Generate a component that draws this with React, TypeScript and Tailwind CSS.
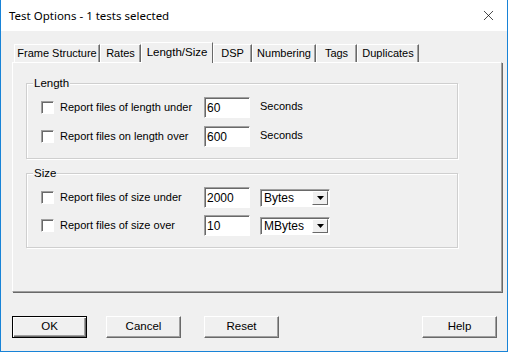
import { X } from 'lucide-react'

const font = { fontFamily: '"Liberation Sans", Arial, sans-serif' }

const tabs = [
  { label: 'Frame Structure', w: 'w-[86px]' },
  { label: 'Rates', w: 'w-[41px]' },
  { label: 'Length/Size', w: 'w-[72px]', active: true },
  { label: 'DSP', w: 'w-[39px]' },
  { label: 'Numbering', w: 'w-[64px]' },
  { label: 'Tags', w: 'w-[41px]' },
  { label: 'Duplicates', w: 'w-[62px]' }
]

function Checkbox() {
  return (
    <span className="block h-[13px] w-[13px] shrink-0 border border-b-white border-l-[#a0a0a0] border-r-white border-t-[#a0a0a0] bg-white shadow-[inset_1px_1px_0_#696969]" />
  )
}

function TextBox({ value }: { value: string }) {
  return (
    <div className="flex h-[21px] w-[46px] shrink-0 items-center border border-b-white border-l-[#a0a0a0] border-r-white border-t-[#a0a0a0] bg-white pl-[2px] text-[12px] text-black shadow-[inset_1px_1px_0_#696969]">
      {value}
    </div>
  )
}

function Combo({ value }: { value: string }) {
  return (
    <div className="flex h-[18px] w-[70px] items-center justify-between border border-b-white border-l-[#a0a0a0] border-r-white border-t-[#a0a0a0] bg-white pl-[3px] text-[12px] shadow-[inset_1px_1px_0_#696969]">
      <span>{value}</span>
      <span className="mr-[1px] flex h-[14px] w-[16px] items-center justify-center border border-b-[#696969] border-l-white border-r-[#696969] border-t-white bg-[#f0f0f0]">
        <svg width="7" height="4" viewBox="0 0 7 4">
          <path d="M0 0h7L3.5 4z" fill="#000" />
        </svg>
      </span>
    </div>
  )
}

function Row({ label, children }: { label: string; children: React.ReactNode }) {
  return (
    <div className="flex h-[21px] items-center">
      <Checkbox />
      <span className="ml-[6px] w-[144px] whitespace-nowrap text-[11px]">{label}</span>
      {children}
    </div>
  )
}

function Group({ title, className, children }: { title: string; className: string; children: React.ReactNode }) {
  return (
    <div
      className={`relative ml-[13px] w-[432px] border border-[#cfcfcf] shadow-[inset_1px_1px_0_white,1px_1px_0_white] ${className}`}
    >
      <span className="absolute -top-[8px] left-[6px] bg-[#f0f0f0] px-[1px] text-[11.5px] leading-[14px]">
        {title}
      </span>
      {children}
    </div>
  )
}

function Button({ label, def, className }: { label: string; def?: boolean; className?: string }) {
  return (
    <div
      className={`flex h-[22px] w-[75px] items-center justify-center text-[11.5px] ${
        def
          ? 'border border-[#000] shadow-[inset_1px_1px_0_white,inset_-1px_-1px_0_#696969,inset_-2px_-2px_0_#a0a0a0]'
          : 'border border-b-[#696969] border-l-white border-r-[#696969] border-t-white shadow-[inset_-1px_-1px_0_#a0a0a0]'
      } ${className ?? ''}`}
    >
      {label}
    </div>
  )
}

export default function App() {
  return (
    <div
      className="flex h-[352px] w-[508px] flex-col border-b border-l border-r border-[#1883d7] bg-[#f0f0f0] text-black"
      style={font}
    >
      {/* Title bar */}
      <div className="flex h-[31px] shrink-0 items-center justify-between bg-white pl-[8px] pr-[10px]">
        <span className="text-[11.5px]" style={{ fontFamily: '"Noto Sans", "Open Sans", sans-serif' }}>
          Test Options - 1 tests selected
        </span>
        <X size={17} strokeWidth={1} />
      </div>

      <div className="flex flex-col pl-[11px] pr-[5px] pt-[11px]">
        {/* Tabs */}
        <div className="relative z-10 flex h-[20px] items-end pl-[2px]">
          {tabs.map((t) =>
            t.active ? (
              <div
                key={t.label}
                className={`-mb-[1px] flex h-[21px] ${t.w} items-center justify-center whitespace-nowrap border-l border-t border-r border-l-white border-t-white border-r-[#696969] bg-[#f0f0f0] text-[11.5px]`}
              >
                {t.label}
              </div>
            ) : (
              <div
                key={t.label}
                className={`flex h-[18px] ${t.w} items-center justify-center whitespace-nowrap border-l border-t border-r border-l-white border-t-white border-r-[#696969] text-[11px] shadow-[inset_-1px_0_0_#a0a0a0]`}
              >
                {t.label}
              </div>
            )
          )}
        </div>

        {/* Panel */}
        <div className="h-[230px] w-[490px] border border-b-[#a0a0a0] border-l-white border-r-[#a0a0a0] border-t-white shadow-[1px_1px_0_#696969]">
          <Group title="Length" className="mt-[20px] h-[76px]">
            <div className="flex flex-col gap-[8px] pl-[14px] pt-[13px]">
              <Row label="Report files of length under">
                <TextBox value="60" />
                <span className="ml-[10px] -mt-[3px] text-[11px]">Seconds</span>
              </Row>
              <Row label="Report files on length over">
                <TextBox value="600" />
                <span className="ml-[10px] -mt-[3px] text-[11px]">Seconds</span>
              </Row>
            </div>
          </Group>

          <Group title="Size" className="mt-[14px] h-[75px]">
            <div className="flex flex-col gap-[7px] pl-[14px] pt-[13px]">
              <Row label="Report files of size under">
                <TextBox value="2000" />
                <span className="ml-[10px]">
                  <Combo value="Bytes" />
                </span>
              </Row>
              <Row label="Report files of size over">
                <TextBox value="10" />
                <span className="ml-[10px]">
                  <Combo value="MBytes" />
                </span>
              </Row>
            </div>
          </Group>
        </div>

        {/* Buttons */}
        <div className="mt-[24px] flex pr-[5px]">
          <Button label="OK" def />
          <Button label="Cancel" className="ml-[19px]" />
          <Button label="Reset" className="ml-[23px]" />
          <Button label="Help" className="ml-auto" />
        </div>
      </div>
    </div>
  )
}
